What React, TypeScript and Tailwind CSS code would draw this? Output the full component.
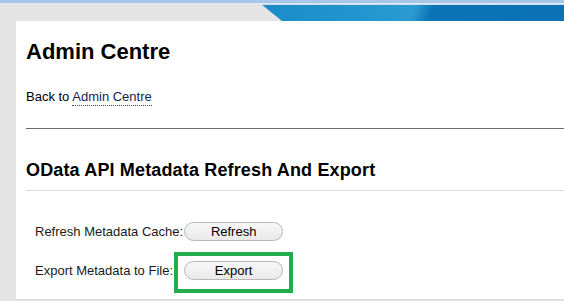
export default function App() {
  return (
    <div className="h-[301px] w-full overflow-hidden bg-[#e4e4e4] font-['Liberation_Sans',Arial,sans-serif] text-black">
      {/* top strip */}
      <div className="h-[3px] bg-[#a8c6e8]" />
      <div className="h-px bg-[#dfe8f1]" />

      {/* banner */}
      <div className="flex h-[17px]">
        <div className="w-[261px]" />
        <div className="flex-1 border-t border-[#cfe2f2] bg-[linear-gradient(110deg,#1a8bc7_0%,#2798d0_44%,#2b9bd2_50%,#0b74b7_56%,#0a72b5_100%)] [clip-path:polygon(0_0,100%_0,100%_100%,21px_100%)]" />
      </div>

      {/* page panel */}
      <div className="ml-[16px] h-[279px] border-b border-[#d9d9d9] bg-white pl-[10px]">
        <h1 className="pt-[18px] text-[22px] font-bold leading-[26px]">Admin Centre</h1>

        <p className="mt-[24px] text-[13px] leading-[16px]">
          Back to{' '}
          <a className="border-b border-dotted border-[#444] pb-px text-[#1c1c4e]">Admin Centre</a>
        </p>

        <div className="mt-[23px] h-px bg-[#6a6a6a]" />

        <h2 className="mt-[30px] text-[18px] font-bold leading-[22px] tracking-[0.15px]">
          OData API Metadata Refresh And Export
        </h2>

        <div className="mt-[9px] h-px bg-[#dadada]" />

        <div className="ml-[9px] mt-[31px] grid grid-cols-[auto_auto] items-center justify-start gap-x-px gap-y-[20px] text-[13px] text-[#1a1a1a]">
          <span className="leading-[19px]">Refresh Metadata Cache:</span>
          <button className="h-[19px] w-[99px] rounded-full border border-[#b8b8b8] bg-[linear-gradient(#f8f8f8,#e9e9e9)] text-[13px] leading-none text-black">
            Refresh
          </button>

          <span className="leading-[19px]">Export Metadata to File:</span>
          <div className="relative">
            <button className="h-[19px] w-[99px] rounded-full border border-[#b8b8b8] bg-[linear-gradient(#f8f8f8,#e9e9e9)] text-[13px] leading-none text-black">
              Export
            </button>
            {/* highlight annotation */}
            <div className="absolute -bottom-[12px] -left-[10px] -right-[10px] -top-[9px] border-[4px] border-[#21ad4b]" />
          </div>
        </div>
      </div>
    </div>
  )
}
